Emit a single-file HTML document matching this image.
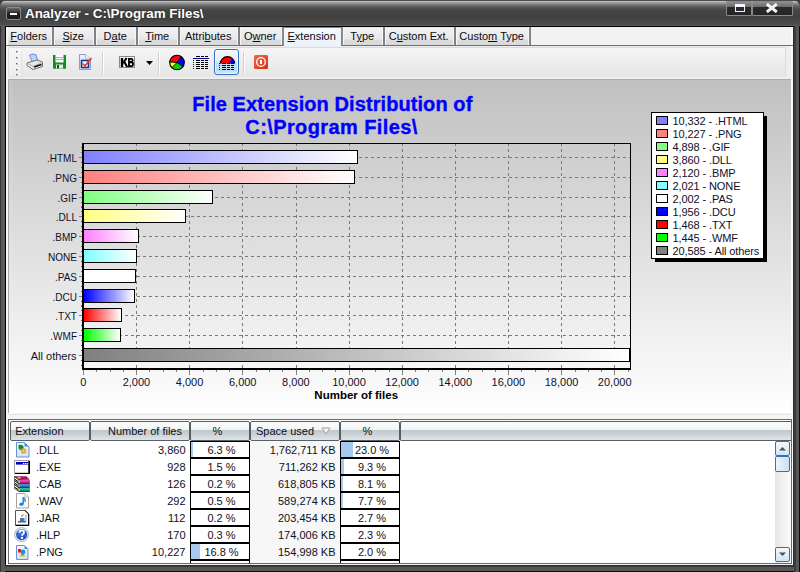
<!DOCTYPE html>
<html><head><meta charset="utf-8"><title>Analyzer</title>
<style>
*{margin:0;padding:0;box-sizing:border-box}
html,body{width:800px;height:572px;overflow:hidden;background:#3c3c3c}
body{position:relative;font-family:"Liberation Sans",sans-serif;font-size:11px;color:#000}
.a{position:absolute}
.t{white-space:pre}
u{text-decoration:underline;text-underline-offset:1px}
</style></head><body>
<div class="a" style="left:0px;top:0px;width:800px;height:572px;background:#3a3a3a;border-radius:7px 7px 0 0;"></div>
<div class="a" style="left:0px;top:0px;width:800px;height:26px;border-radius:7px 7px 0 0;background:linear-gradient(to bottom,#4e4e4e 0.5px,#bababa 1.5px,#a2a2a2 2.5px,#909090 3.5px,#7c7c7c 4.5px,#6c6c6c 5.5px,#606060 6.5px,#575757 7.5px,#4f4f4f 8.5px,#4a4a4a 9.5px,#464646 10.5px,#434343 14.5px,#414141 18.5px,#474747 20.5px,#4e4e4e 24.5px,#5a5a5a 25.5px);"></div>
<div class="a" style="left:0px;top:26px;width:6px;height:546px;background:linear-gradient(to right,#333 0,#333 1px,#555 1px,#5a5a5a 2px,#5a5a5a 5px,#000 5px,#000 6px);"></div>
<div class="a" style="left:793px;top:26px;width:7px;height:546px;background:linear-gradient(to right,#2e2e2e 0,#2e2e2e 1px,#3c3c3c 1px,#3c3c3c 3px,#575757 3px,#575757 6px,#0c0c0c 6px);"></div>
<div class="a" style="left:5px;top:565px;width:789px;height:7px;background:linear-gradient(to bottom,#2e2e2e 0,#2e2e2e 1px,#3c3c3c 1px,#3c3c3c 2px,#575757 2px,#575757 6px,#0c0c0c 6px);"></div>
<div class="a" style="left:5px;top:26px;width:789px;height:1px;background:#000;"></div>
<div class="a" style="left:6px;top:7px;width:15px;height:13px;border:1px solid #8a8a8a;border-radius:2px;background:linear-gradient(#6a6a6a 0,#3a3a3a 4px,#222 5px,#1c1c1c);"></div>
<div class="a" style="left:10px;top:13px;width:7px;height:2px;background:#fff;"></div>
<div class="a t" style="left:25px;top:7.00px;font-size:13.4px;line-height:13.4px;font-weight:700;color:#fff;text-shadow:0 0 2px rgba(0,0,0,.6);">Analyzer - C:\Program Files\</div>
<div class="a" style="left:726px;top:1px;width:26px;height:15px;border:1px solid #8a8a8a;border-radius:1px;background:linear-gradient(#8e8e8e 0,#6a6a6a 5px,#2a2a2a 5px,#242424 14px);"></div>
<div class="a" style="left:735px;top:4px;width:10px;height:8px;border:1.5px solid #f4f4f4;border-top-width:3px;background:#262638;"></div>
<div class="a" style="left:752px;top:1px;width:41px;height:15px;border:1px solid #8a8a8a;border-radius:1px;background:linear-gradient(#8e8e8e 0,#6a6a6a 5px,#2a2a2a 5px,#242424 14px);"></div>
<svg class="a" style="left:765px;top:3px;" width="14" height="10" viewBox="0 0 14 10"><path d="M1.8 1 L11.8 9 M11.8 1 L1.8 9" stroke="#f4f4f4" stroke-width="2.9"/></svg>
<div class="a" style="left:6px;top:27px;width:787px;height:538px;background:#f0f0f0;"></div>
<div class="a" style="left:6px;top:27px;width:2px;height:538px;background:#f8f8f8;"></div>
<div class="a" style="left:791px;top:27px;width:2px;height:538px;background:#fafafa;"></div>
<div class="a" style="left:8px;top:27px;width:783px;height:18px;background:#f2f2f2;"></div>
<div class="a" style="left:6px;top:45px;width:787px;height:1px;background:#6e6e6e;"></div>
<div class="a" style="left:7px;top:27px;width:45px;height:18px;background:linear-gradient(#e4e4e4 0,#e4e4e4 1px,#f2f2f2 1px,#e8e8e8 12px,#dcdcdc 13px,#d8d8d8 18px);border-left:1px solid #f6f6f6;border-right:1px solid #f4f4f4;"></div>
<div class="a" style="left:52px;top:27px;width:2px;height:18px;background:#80808a;"></div>
<div class="a t" style="left:-21.3px;width:100px;text-align:center;top:31.00px;font-size:11px;line-height:11px;font-weight:400;color:#0a0a14;"><u>F</u>olders</div>
<div class="a" style="left:54px;top:27px;width:40px;height:18px;background:linear-gradient(#e4e4e4 0,#e4e4e4 1px,#f2f2f2 1px,#e8e8e8 12px,#dcdcdc 13px,#d8d8d8 18px);border-left:1px solid #f6f6f6;border-right:1px solid #f4f4f4;"></div>
<div class="a" style="left:94px;top:27px;width:2px;height:18px;background:#80808a;"></div>
<div class="a t" style="left:23.200000000000003px;width:100px;text-align:center;top:31.00px;font-size:11px;line-height:11px;font-weight:400;color:#0a0a14;"><u>S</u>ize</div>
<div class="a" style="left:96px;top:27px;width:40px;height:18px;background:linear-gradient(#e4e4e4 0,#e4e4e4 1px,#f2f2f2 1px,#e8e8e8 12px,#dcdcdc 13px,#d8d8d8 18px);border-left:1px solid #f6f6f6;border-right:1px solid #f4f4f4;"></div>
<div class="a" style="left:136px;top:27px;width:2px;height:18px;background:#80808a;"></div>
<div class="a t" style="left:65.2px;width:100px;text-align:center;top:31.00px;font-size:11px;line-height:11px;font-weight:400;color:#0a0a14;">D<u>a</u>te</div>
<div class="a" style="left:138px;top:27px;width:40px;height:18px;background:linear-gradient(#e4e4e4 0,#e4e4e4 1px,#f2f2f2 1px,#e8e8e8 12px,#dcdcdc 13px,#d8d8d8 18px);border-left:1px solid #f6f6f6;border-right:1px solid #f4f4f4;"></div>
<div class="a" style="left:178px;top:27px;width:2px;height:18px;background:#80808a;"></div>
<div class="a t" style="left:107.19999999999999px;width:100px;text-align:center;top:31.00px;font-size:11px;line-height:11px;font-weight:400;color:#0a0a14;"><u>T</u>ime</div>
<div class="a" style="left:180px;top:27px;width:58px;height:18px;background:linear-gradient(#e4e4e4 0,#e4e4e4 1px,#f2f2f2 1px,#e8e8e8 12px,#dcdcdc 13px,#d8d8d8 18px);border-left:1px solid #f6f6f6;border-right:1px solid #f4f4f4;"></div>
<div class="a" style="left:238px;top:27px;width:2px;height:18px;background:#80808a;"></div>
<div class="a t" style="left:158.2px;width:100px;text-align:center;top:31.00px;font-size:11px;line-height:11px;font-weight:400;color:#0a0a14;">Attri<u>b</u>utes</div>
<div class="a" style="left:240px;top:27px;width:42px;height:18px;background:linear-gradient(#e4e4e4 0,#e4e4e4 1px,#f2f2f2 1px,#e8e8e8 12px,#dcdcdc 13px,#d8d8d8 18px);border-left:1px solid #f6f6f6;border-right:1px solid #f4f4f4;"></div>
<div class="a t" style="left:210.2px;width:100px;text-align:center;top:31.00px;font-size:11px;line-height:11px;font-weight:400;color:#0a0a14;">O<u>w</u>ner</div>
<div class="a" style="left:283px;top:27px;width:59px;height:19px;border:1px solid #3c98e8;border-bottom:none;background:linear-gradient(#f4f9fd,#e8f3fb);"></div>
<div class="a t" style="left:261.7px;width:100px;text-align:center;top:31.00px;font-size:11px;line-height:11px;font-weight:400;color:#0a0a14;"><u>E</u>xtension</div>
<div class="a" style="left:343px;top:27px;width:40px;height:18px;background:linear-gradient(#e4e4e4 0,#e4e4e4 1px,#f2f2f2 1px,#e8e8e8 12px,#dcdcdc 13px,#d8d8d8 18px);border-left:1px solid #f6f6f6;border-right:1px solid #f4f4f4;"></div>
<div class="a" style="left:383px;top:27px;width:2px;height:18px;background:#80808a;"></div>
<div class="a t" style="left:312.2px;width:100px;text-align:center;top:31.00px;font-size:11px;line-height:11px;font-weight:400;color:#0a0a14;">T<u>y</u>pe</div>
<div class="a" style="left:385px;top:27px;width:69px;height:18px;background:linear-gradient(#e4e4e4 0,#e4e4e4 1px,#f2f2f2 1px,#e8e8e8 12px,#dcdcdc 13px,#d8d8d8 18px);border-left:1px solid #f6f6f6;border-right:1px solid #f4f4f4;"></div>
<div class="a" style="left:454px;top:27px;width:2px;height:18px;background:#80808a;"></div>
<div class="a t" style="left:368.7px;width:100px;text-align:center;top:31.00px;font-size:11px;line-height:11px;font-weight:400;color:#0a0a14;">C<u>u</u>stom Ext.</div>
<div class="a" style="left:456px;top:27px;width:73px;height:18px;background:linear-gradient(#e4e4e4 0,#e4e4e4 1px,#f2f2f2 1px,#e8e8e8 12px,#dcdcdc 13px,#d8d8d8 18px);border-left:1px solid #f6f6f6;border-right:1px solid #f4f4f4;"></div>
<div class="a" style="left:529px;top:27px;width:2px;height:18px;background:#80808a;"></div>
<div class="a t" style="left:441.7px;width:100px;text-align:center;top:31.00px;font-size:11px;line-height:11px;font-weight:400;color:#0a0a14;">Custo<u>m</u> Type</div>
<div class="a" style="left:282px;top:27px;width:1px;height:18px;background:#8a8a8a;"></div>
<div class="a" style="left:342px;top:27px;width:1px;height:18px;background:#8a8a8a;"></div>
<div class="a" style="left:529px;top:27px;width:1px;height:18px;background:#8a8a8a;"></div>
<div class="a" style="left:8px;top:46px;width:783px;height:33px;background:#eeeef0;"></div>
<div class="a" style="left:8px;top:47px;width:778px;height:30px;border:1px solid #dcdcdc;border-bottom-color:#e4e4e4;border-radius:2px;background:linear-gradient(#f5f5f5,#e6e6e6);"></div>
<div class="a" style="left:9px;top:48px;width:12px;height:28px;background:linear-gradient(#f6f6f6,#eeeeee);"></div>
<div class="a" style="left:21px;top:51px;width:1px;height:24px;background:#e2e2e2;"></div>
<div class="a" style="left:16px;top:51px;width:2px;height:2px;background:#c4c4c4;"></div>
<div class="a" style="left:16px;top:51px;width:1px;height:1px;background:#5a5a5a;"></div>
<div class="a" style="left:16px;top:57px;width:2px;height:2px;background:#c4c4c4;"></div>
<div class="a" style="left:16px;top:57px;width:1px;height:1px;background:#5a5a5a;"></div>
<div class="a" style="left:16px;top:63px;width:2px;height:2px;background:#c4c4c4;"></div>
<div class="a" style="left:16px;top:63px;width:1px;height:1px;background:#5a5a5a;"></div>
<div class="a" style="left:16px;top:69px;width:2px;height:2px;background:#c4c4c4;"></div>
<div class="a" style="left:16px;top:69px;width:1px;height:1px;background:#5a5a5a;"></div>
<div class="a" style="left:16px;top:74px;width:2px;height:2px;background:#c4c4c4;"></div>
<div class="a" style="left:16px;top:74px;width:1px;height:1px;background:#5a5a5a;"></div>
<div class="a" style="left:8px;top:79px;width:783px;height:1px;background:#b0b0a0;"></div>
<div class="a" style="left:102px;top:52px;width:1px;height:22px;background:#d0d0d0;"></div>
<div class="a" style="left:103px;top:52px;width:1px;height:22px;background:#fff;"></div>
<div class="a" style="left:158px;top:52px;width:1px;height:22px;background:#d0d0d0;"></div>
<div class="a" style="left:159px;top:52px;width:1px;height:22px;background:#fff;"></div>
<div class="a" style="left:243px;top:52px;width:1px;height:22px;background:#d0d0d0;"></div>
<div class="a" style="left:244px;top:52px;width:1px;height:22px;background:#fff;"></div>
<svg class="a" style="left:24px;top:50px;" width="24" height="24" viewBox="0 0 24 24">
<path d="M5.5 5 L9 4 L12 4.8 L13.8 10.5 L8.2 11.8 Z" fill="#b0d8f8" stroke="#8078d8" stroke-width="0.9"/>
<path d="M3 13 L13 10 L18.5 12 L18.5 16.5 L9 19.5 L3 15.5 Z" fill="#e8e8e8" stroke="#707070" stroke-width="1"/>
<path d="M3 13 L9 16.5 L18.5 12.5" fill="none" stroke="#a0a0a0" stroke-width="0.8"/>
<path d="M10 17 L17.5 14.5" stroke="#111" stroke-width="1.6"/>
</svg>
<svg class="a" style="left:50px;top:50px;" width="24" height="24" viewBox="0 0 24 24">
<rect x="3" y="5" width="13" height="14" fill="#fff"/>
<path d="M3 5 H5.5 V12.5 H13.5 V5 H16 V18.8 H3 Z" fill="#109018"/>
<rect x="6" y="7" width="7" height="0.9" fill="#a0a0a0"/>
<rect x="6" y="9" width="7" height="0.9" fill="#a0a0a0"/>
<rect x="6" y="14.5" width="7" height="4" fill="#e8e8f0"/>
<rect x="7" y="15" width="2" height="3.5" fill="#0a6010"/>
</svg>
<svg class="a" style="left:74px;top:50px;" width="24" height="24" viewBox="0 0 24 24">
<path d="M5.5 4.5 H11.5 L16.5 9 V19.5 H5.5 Z" fill="#e4eefa" stroke="#9898c8" stroke-width="1"/>
<path d="M11.5 4.5 V9 H16.5" fill="#f4f4f4" stroke="#b0b0b0" stroke-width="0.8"/>
<rect x="7.5" y="10.5" width="7" height="7" fill="#fff" stroke="#0838a0" stroke-width="1.6"/>
<path d="M8.5 13.5 L11 15.8 L17.5 8" fill="none" stroke="#f03010" stroke-width="1.6"/>
</svg>
<div class="a" style="left:119px;top:56px;width:16px;height:12px;border:1px solid #8a8a8a;background:#f8f8f8;"></div>
<svg class="a" style="left:119px;top:56px;" width="16" height="12" viewBox="0 0 16 12"><path d="M3 2 V11" stroke="#000" stroke-width="2.4"/><path d="M4 7.2 L7.6 2 M5.2 5.8 L8.2 11" stroke="#000" stroke-width="2.1"/><path d="M10 2 V11 M10 2.9 H12.3 Q13.6 2.9 13.6 4.4 Q13.6 5.9 12.3 5.9 H10 M10 6.3 H12.6 Q14 6.3 14 8.1 Q14 10.1 12.6 10.1 H10" fill="none" stroke="#000" stroke-width="1.9"/></svg>
<svg class="a" style="left:146px;top:61px;" width="7" height="4" viewBox="0 0 7 4"><path d="M0 0 H7 L3.5 4 Z" fill="#000"/></svg>
<svg class="a" style="left:168px;top:54px;" width="18" height="18" viewBox="0 0 18 18">
<circle cx="9" cy="8.5" r="7.3" fill="#00d000"/>
<path d="M9 8.5 L1.7 8 A7.3 7.3 0 0 1 13.2 2.5 Z" fill="#ff0000"/>
<path d="M9 8.5 L13.2 2.5 A7.3 7.3 0 0 1 15 12.7 Z" fill="#0000ff"/>
<path d="M9 8.5 L3.84 13.66 A7.3 7.3 0 0 1 1.7 8 Z" fill="#ffff00"/>
<path d="M1.7 8 L9 8.5 L13.2 2.5 M9 8.5 L15 12.7 M9 8.5 L3.84 13.66" stroke="#000" stroke-width="0.9" fill="none"/>
<circle cx="9" cy="8.5" r="7.3" fill="none" stroke="#000" stroke-width="1.1"/>
</svg>
<svg class="a" style="left:192px;top:56px;shape-rendering:crispEdges;" width="18" height="14" viewBox="0 0 18 14"><rect x="1" y="2" width="16" height="1" fill="#0000a0"/><rect x="4" y="0" width="4" height="1" fill="#000"/><rect x="9" y="0" width="3" height="1" fill="#000"/><rect x="13" y="0" width="3" height="1" fill="#000"/><rect x="1" y="4" width="1" height="1" fill="#0000c0"/><rect x="4" y="4" width="4" height="1" fill="#000"/><rect x="9" y="4" width="3" height="1" fill="#000"/><rect x="13" y="4" width="3" height="1" fill="#000"/><rect x="1" y="6" width="1" height="1" fill="#0000c0"/><rect x="4" y="6" width="4" height="1" fill="#000"/><rect x="9" y="6" width="3" height="1" fill="#000"/><rect x="13" y="6" width="3" height="1" fill="#000"/><rect x="1" y="8" width="1" height="1" fill="#0000c0"/><rect x="4" y="8" width="4" height="1" fill="#000"/><rect x="9" y="8" width="3" height="1" fill="#000"/><rect x="13" y="8" width="3" height="1" fill="#000"/><rect x="1" y="10" width="1" height="1" fill="#0000c0"/><rect x="4" y="10" width="4" height="1" fill="#000"/><rect x="9" y="10" width="3" height="1" fill="#000"/><rect x="13" y="10" width="3" height="1" fill="#000"/><rect x="1" y="12" width="1" height="1" fill="#0000c0"/><rect x="4" y="12" width="4" height="1" fill="#000"/><rect x="9" y="12" width="3" height="1" fill="#000"/><rect x="13" y="12" width="3" height="1" fill="#000"/></svg>
<div class="a" style="left:214px;top:49px;width:25px;height:26px;border:1px solid #2f6fc4;border-radius:3px;background:linear-gradient(#f2f7fd 0,#e4eff9 45%,#c6e0f5 50%,#bcdcf2 85%,#c8f0fa 100%);box-shadow:inset 0 0 0 1px rgba(255,255,255,.6);"></div>
<svg class="a" style="left:219px;top:56px;" width="18" height="15" viewBox="0 0 18 15"><path d="M1.5 7.5 A7 6.8 0 0 1 15.5 7.5 Z" fill="#ff0000"/>
<path d="M9.5 7.5 L13.3 2.6 A7 6.8 0 0 1 15.5 7.5 Z" fill="#0000ff"/>
<path d="M1.5 7.5 A7 6.8 0 0 1 15.5 7.5" fill="none" stroke="#000" stroke-width="1.2"/><rect x="0" y="7" width="1" height="1" fill="#0000a0"/><rect x="3" y="7" width="4" height="1" fill="#000"/><rect x="8" y="7" width="3" height="1" fill="#000"/><rect x="12" y="7" width="3" height="1" fill="#000"/><rect x="0" y="9" width="1" height="1" fill="#0000a0"/><rect x="3" y="9" width="4" height="1" fill="#000"/><rect x="8" y="9" width="3" height="1" fill="#000"/><rect x="12" y="9" width="3" height="1" fill="#000"/><rect x="0" y="11" width="1" height="1" fill="#0000a0"/><rect x="3" y="11" width="4" height="1" fill="#000"/><rect x="8" y="11" width="3" height="1" fill="#000"/><rect x="12" y="11" width="3" height="1" fill="#000"/><rect x="0" y="13" width="1" height="1" fill="#0000a0"/><rect x="3" y="13" width="4" height="1" fill="#000"/><rect x="8" y="13" width="3" height="1" fill="#000"/><rect x="12" y="13" width="3" height="1" fill="#000"/></svg>
<svg class="a" style="left:253px;top:54px;" width="16" height="16" viewBox="0 0 16 16">
<defs><linearGradient id="sg" x1="0" y1="0" x2="1" y2="1"><stop offset="0" stop-color="#f06848"/><stop offset="1" stop-color="#d83010"/></linearGradient></defs>
<rect x="1" y="1" width="14" height="14" rx="1.5" fill="url(#sg)"/>
<circle cx="8" cy="8" r="4.3" fill="none" stroke="#fff" stroke-width="1.3"/>
<rect x="7" y="6" width="2" height="4" fill="#fff"/>
</svg>
<div class="a" style="left:8px;top:80px;width:783px;height:333px;background:linear-gradient(#c0c0c0,#ffffff);"></div>
<div class="a" style="left:8px;top:79px;width:1px;height:334px;background:#a8a8a0;"></div>
<div class="a" style="left:9px;top:80px;width:4px;height:333px;background:rgba(255,255,255,0.07);"></div>
<div class="a t" style="left:132.3px;width:400px;text-align:center;top:94.00px;font-size:20px;line-height:20px;font-weight:700;color:#0000ff;letter-spacing:0.08px;-webkit-text-stroke:0.35px #0000ff;">File Extension Distribution of</div>
<div class="a t" style="left:131.5px;width:400px;text-align:center;top:117.00px;font-size:20px;line-height:20px;font-weight:700;color:#0000ff;letter-spacing:0.4px;-webkit-text-stroke:0.35px #0000ff;">C:\Program Files\</div>
<div class="a" style="left:136px;top:143px;width:1px;height:225px;background:repeating-linear-gradient(to bottom,#7a7a7a 0,#7a7a7a 3px,transparent 3px,transparent 6px);"></div>
<div class="a" style="left:189px;top:143px;width:1px;height:225px;background:repeating-linear-gradient(to bottom,#7a7a7a 0,#7a7a7a 3px,transparent 3px,transparent 6px);"></div>
<div class="a" style="left:242px;top:143px;width:1px;height:225px;background:repeating-linear-gradient(to bottom,#7a7a7a 0,#7a7a7a 3px,transparent 3px,transparent 6px);"></div>
<div class="a" style="left:296px;top:143px;width:1px;height:225px;background:repeating-linear-gradient(to bottom,#7a7a7a 0,#7a7a7a 3px,transparent 3px,transparent 6px);"></div>
<div class="a" style="left:349px;top:143px;width:1px;height:225px;background:repeating-linear-gradient(to bottom,#7a7a7a 0,#7a7a7a 3px,transparent 3px,transparent 6px);"></div>
<div class="a" style="left:402px;top:143px;width:1px;height:225px;background:repeating-linear-gradient(to bottom,#7a7a7a 0,#7a7a7a 3px,transparent 3px,transparent 6px);"></div>
<div class="a" style="left:455px;top:143px;width:1px;height:225px;background:repeating-linear-gradient(to bottom,#7a7a7a 0,#7a7a7a 3px,transparent 3px,transparent 6px);"></div>
<div class="a" style="left:508px;top:143px;width:1px;height:225px;background:repeating-linear-gradient(to bottom,#7a7a7a 0,#7a7a7a 3px,transparent 3px,transparent 6px);"></div>
<div class="a" style="left:561px;top:143px;width:1px;height:225px;background:repeating-linear-gradient(to bottom,#7a7a7a 0,#7a7a7a 3px,transparent 3px,transparent 6px);"></div>
<div class="a" style="left:614px;top:143px;width:1px;height:225px;background:repeating-linear-gradient(to bottom,#7a7a7a 0,#7a7a7a 3px,transparent 3px,transparent 6px);"></div>
<div class="a" style="left:83px;top:157px;width:547px;height:1px;background:repeating-linear-gradient(to right,#7a7a7a 0,#7a7a7a 3px,transparent 3px,transparent 6px);"></div>
<div class="a" style="left:83px;top:177px;width:547px;height:1px;background:repeating-linear-gradient(to right,#7a7a7a 0,#7a7a7a 3px,transparent 3px,transparent 6px);"></div>
<div class="a" style="left:83px;top:197px;width:547px;height:1px;background:repeating-linear-gradient(to right,#7a7a7a 0,#7a7a7a 3px,transparent 3px,transparent 6px);"></div>
<div class="a" style="left:83px;top:216px;width:547px;height:1px;background:repeating-linear-gradient(to right,#7a7a7a 0,#7a7a7a 3px,transparent 3px,transparent 6px);"></div>
<div class="a" style="left:83px;top:236px;width:547px;height:1px;background:repeating-linear-gradient(to right,#7a7a7a 0,#7a7a7a 3px,transparent 3px,transparent 6px);"></div>
<div class="a" style="left:83px;top:256px;width:547px;height:1px;background:repeating-linear-gradient(to right,#7a7a7a 0,#7a7a7a 3px,transparent 3px,transparent 6px);"></div>
<div class="a" style="left:83px;top:276px;width:547px;height:1px;background:repeating-linear-gradient(to right,#7a7a7a 0,#7a7a7a 3px,transparent 3px,transparent 6px);"></div>
<div class="a" style="left:83px;top:296px;width:547px;height:1px;background:repeating-linear-gradient(to right,#7a7a7a 0,#7a7a7a 3px,transparent 3px,transparent 6px);"></div>
<div class="a" style="left:83px;top:315px;width:547px;height:1px;background:repeating-linear-gradient(to right,#7a7a7a 0,#7a7a7a 3px,transparent 3px,transparent 6px);"></div>
<div class="a" style="left:83px;top:335px;width:547px;height:1px;background:repeating-linear-gradient(to right,#7a7a7a 0,#7a7a7a 3px,transparent 3px,transparent 6px);"></div>
<div class="a" style="left:83px;top:355px;width:547px;height:1px;background:repeating-linear-gradient(to right,#7a7a7a 0,#7a7a7a 3px,transparent 3px,transparent 6px);"></div>
<div class="a" style="left:82px;top:150px;width:276px;height:14px;border:1px solid #000;border-left-width:2px;background:linear-gradient(to right,#8080ff,#fff);"></div>
<div class="a t" style="left:-3.4000000000000057px;width:80px;text-align:right;top:153.00px;font-size:11px;line-height:11px;font-weight:400;color:#10102a;transform:scaleX(0.91);transform-origin:100% 50%;">.HTML</div>
<div class="a" style="left:79px;top:157px;width:3px;height:1px;background:#808080;"></div>
<div class="a" style="left:81px;top:147px;width:1px;height:1px;background:#6a6a6a;"></div>
<div class="a" style="left:81px;top:152px;width:1px;height:1px;background:#6a6a6a;"></div>
<div class="a" style="left:81px;top:162px;width:1px;height:1px;background:#6a6a6a;"></div>
<div class="a" style="left:81px;top:167px;width:1px;height:1px;background:#6a6a6a;"></div>
<div class="a" style="left:82px;top:170px;width:273px;height:14px;border:1px solid #000;border-left-width:2px;background:linear-gradient(to right,#ff8080,#fff);"></div>
<div class="a t" style="left:-3.4000000000000057px;width:80px;text-align:right;top:173.00px;font-size:11px;line-height:11px;font-weight:400;color:#10102a;transform:scaleX(0.91);transform-origin:100% 50%;">.PNG</div>
<div class="a" style="left:79px;top:177px;width:3px;height:1px;background:#808080;"></div>
<div class="a" style="left:81px;top:167px;width:1px;height:1px;background:#6a6a6a;"></div>
<div class="a" style="left:81px;top:172px;width:1px;height:1px;background:#6a6a6a;"></div>
<div class="a" style="left:81px;top:182px;width:1px;height:1px;background:#6a6a6a;"></div>
<div class="a" style="left:81px;top:187px;width:1px;height:1px;background:#6a6a6a;"></div>
<div class="a" style="left:82px;top:190px;width:131px;height:14px;border:1px solid #000;border-left-width:2px;background:linear-gradient(to right,#80ff80,#fff);"></div>
<div class="a t" style="left:-3.4000000000000057px;width:80px;text-align:right;top:193.00px;font-size:11px;line-height:11px;font-weight:400;color:#10102a;transform:scaleX(0.91);transform-origin:100% 50%;">.GIF</div>
<div class="a" style="left:79px;top:197px;width:3px;height:1px;background:#808080;"></div>
<div class="a" style="left:81px;top:187px;width:1px;height:1px;background:#6a6a6a;"></div>
<div class="a" style="left:81px;top:192px;width:1px;height:1px;background:#6a6a6a;"></div>
<div class="a" style="left:81px;top:202px;width:1px;height:1px;background:#6a6a6a;"></div>
<div class="a" style="left:81px;top:207px;width:1px;height:1px;background:#6a6a6a;"></div>
<div class="a" style="left:82px;top:209px;width:104px;height:14px;border:1px solid #000;border-left-width:2px;background:linear-gradient(to right,#ffff80,#fff);"></div>
<div class="a t" style="left:-3.4000000000000057px;width:80px;text-align:right;top:212.00px;font-size:11px;line-height:11px;font-weight:400;color:#10102a;transform:scaleX(0.91);transform-origin:100% 50%;">.DLL</div>
<div class="a" style="left:79px;top:216px;width:3px;height:1px;background:#808080;"></div>
<div class="a" style="left:81px;top:206px;width:1px;height:1px;background:#6a6a6a;"></div>
<div class="a" style="left:81px;top:211px;width:1px;height:1px;background:#6a6a6a;"></div>
<div class="a" style="left:81px;top:221px;width:1px;height:1px;background:#6a6a6a;"></div>
<div class="a" style="left:81px;top:226px;width:1px;height:1px;background:#6a6a6a;"></div>
<div class="a" style="left:82px;top:229px;width:57px;height:14px;border:1px solid #000;border-left-width:2px;background:linear-gradient(to right,#ff80ff,#fff);"></div>
<div class="a t" style="left:-3.4000000000000057px;width:80px;text-align:right;top:232.00px;font-size:11px;line-height:11px;font-weight:400;color:#10102a;transform:scaleX(0.91);transform-origin:100% 50%;">.BMP</div>
<div class="a" style="left:79px;top:236px;width:3px;height:1px;background:#808080;"></div>
<div class="a" style="left:81px;top:226px;width:1px;height:1px;background:#6a6a6a;"></div>
<div class="a" style="left:81px;top:231px;width:1px;height:1px;background:#6a6a6a;"></div>
<div class="a" style="left:81px;top:241px;width:1px;height:1px;background:#6a6a6a;"></div>
<div class="a" style="left:81px;top:246px;width:1px;height:1px;background:#6a6a6a;"></div>
<div class="a" style="left:82px;top:249px;width:55px;height:14px;border:1px solid #000;border-left-width:2px;background:linear-gradient(to right,#80ffff,#fff);"></div>
<div class="a t" style="left:-3.4000000000000057px;width:80px;text-align:right;top:252.00px;font-size:11px;line-height:11px;font-weight:400;color:#10102a;transform:scaleX(0.91);transform-origin:100% 50%;">NONE</div>
<div class="a" style="left:79px;top:256px;width:3px;height:1px;background:#808080;"></div>
<div class="a" style="left:81px;top:246px;width:1px;height:1px;background:#6a6a6a;"></div>
<div class="a" style="left:81px;top:251px;width:1px;height:1px;background:#6a6a6a;"></div>
<div class="a" style="left:81px;top:261px;width:1px;height:1px;background:#6a6a6a;"></div>
<div class="a" style="left:81px;top:266px;width:1px;height:1px;background:#6a6a6a;"></div>
<div class="a" style="left:82px;top:269px;width:54px;height:14px;border:1px solid #000;border-left-width:2px;background:linear-gradient(to right,#ffffff,#fff);"></div>
<div class="a t" style="left:-3.4000000000000057px;width:80px;text-align:right;top:272.00px;font-size:11px;line-height:11px;font-weight:400;color:#10102a;transform:scaleX(0.91);transform-origin:100% 50%;">.PAS</div>
<div class="a" style="left:79px;top:276px;width:3px;height:1px;background:#808080;"></div>
<div class="a" style="left:81px;top:266px;width:1px;height:1px;background:#6a6a6a;"></div>
<div class="a" style="left:81px;top:271px;width:1px;height:1px;background:#6a6a6a;"></div>
<div class="a" style="left:81px;top:281px;width:1px;height:1px;background:#6a6a6a;"></div>
<div class="a" style="left:81px;top:286px;width:1px;height:1px;background:#6a6a6a;"></div>
<div class="a" style="left:82px;top:289px;width:53px;height:14px;border:1px solid #000;border-left-width:2px;background:linear-gradient(to right,#0000ff,#fff);"></div>
<div class="a t" style="left:-3.4000000000000057px;width:80px;text-align:right;top:292.00px;font-size:11px;line-height:11px;font-weight:400;color:#10102a;transform:scaleX(0.91);transform-origin:100% 50%;">.DCU</div>
<div class="a" style="left:79px;top:296px;width:3px;height:1px;background:#808080;"></div>
<div class="a" style="left:81px;top:286px;width:1px;height:1px;background:#6a6a6a;"></div>
<div class="a" style="left:81px;top:291px;width:1px;height:1px;background:#6a6a6a;"></div>
<div class="a" style="left:81px;top:301px;width:1px;height:1px;background:#6a6a6a;"></div>
<div class="a" style="left:81px;top:306px;width:1px;height:1px;background:#6a6a6a;"></div>
<div class="a" style="left:82px;top:308px;width:40px;height:14px;border:1px solid #000;border-left-width:2px;background:linear-gradient(to right,#ff0000,#fff);"></div>
<div class="a t" style="left:-3.4000000000000057px;width:80px;text-align:right;top:311.00px;font-size:11px;line-height:11px;font-weight:400;color:#10102a;transform:scaleX(0.91);transform-origin:100% 50%;">.TXT</div>
<div class="a" style="left:79px;top:315px;width:3px;height:1px;background:#808080;"></div>
<div class="a" style="left:81px;top:305px;width:1px;height:1px;background:#6a6a6a;"></div>
<div class="a" style="left:81px;top:310px;width:1px;height:1px;background:#6a6a6a;"></div>
<div class="a" style="left:81px;top:320px;width:1px;height:1px;background:#6a6a6a;"></div>
<div class="a" style="left:81px;top:325px;width:1px;height:1px;background:#6a6a6a;"></div>
<div class="a" style="left:82px;top:328px;width:39px;height:14px;border:1px solid #000;border-left-width:2px;background:linear-gradient(to right,#00ff00,#fff);"></div>
<div class="a t" style="left:-3.4000000000000057px;width:80px;text-align:right;top:331.00px;font-size:11px;line-height:11px;font-weight:400;color:#10102a;transform:scaleX(0.91);transform-origin:100% 50%;">.WMF</div>
<div class="a" style="left:79px;top:335px;width:3px;height:1px;background:#808080;"></div>
<div class="a" style="left:81px;top:325px;width:1px;height:1px;background:#6a6a6a;"></div>
<div class="a" style="left:81px;top:330px;width:1px;height:1px;background:#6a6a6a;"></div>
<div class="a" style="left:81px;top:340px;width:1px;height:1px;background:#6a6a6a;"></div>
<div class="a" style="left:81px;top:345px;width:1px;height:1px;background:#6a6a6a;"></div>
<div class="a" style="left:82px;top:348px;width:548px;height:14px;border:1px solid #000;border-left-width:2px;background:linear-gradient(to right,#808080,#fff);"></div>
<div class="a t" style="left:-3.4000000000000057px;width:80px;text-align:right;top:351.00px;font-size:11px;line-height:11px;font-weight:400;color:#10102a;">All others</div>
<div class="a" style="left:79px;top:355px;width:3px;height:1px;background:#808080;"></div>
<div class="a" style="left:81px;top:345px;width:1px;height:1px;background:#6a6a6a;"></div>
<div class="a" style="left:81px;top:350px;width:1px;height:1px;background:#6a6a6a;"></div>
<div class="a" style="left:81px;top:360px;width:1px;height:1px;background:#6a6a6a;"></div>
<div class="a" style="left:81px;top:365px;width:1px;height:1px;background:#6a6a6a;"></div>
<div class="a" style="left:82px;top:143px;width:549px;height:1px;background:#000;"></div>
<div class="a" style="left:82px;top:143px;width:2px;height:227px;background:#000;"></div>
<div class="a" style="left:630px;top:143px;width:1px;height:227px;background:#000;"></div>
<div class="a" style="left:82px;top:368px;width:549px;height:2px;background:#000;"></div>
<div class="a" style="left:83px;top:370px;width:1px;height:5px;background:#808080;"></div>
<div class="a t" style="left:53.3px;width:60px;text-align:center;top:377.00px;font-size:11px;line-height:11px;font-weight:400;color:#10102a;">0</div>
<div class="a" style="left:96px;top:370px;width:1px;height:2px;background:#808080;"></div>
<div class="a" style="left:110px;top:370px;width:1px;height:2px;background:#808080;"></div>
<div class="a" style="left:123px;top:370px;width:1px;height:2px;background:#808080;"></div>
<div class="a" style="left:136px;top:370px;width:1px;height:5px;background:#808080;"></div>
<div class="a t" style="left:106.44px;width:60px;text-align:center;top:377.00px;font-size:11px;line-height:11px;font-weight:400;color:#10102a;">2,000</div>
<div class="a" style="left:149px;top:370px;width:1px;height:2px;background:#808080;"></div>
<div class="a" style="left:163px;top:370px;width:1px;height:2px;background:#808080;"></div>
<div class="a" style="left:176px;top:370px;width:1px;height:2px;background:#808080;"></div>
<div class="a" style="left:189px;top:370px;width:1px;height:5px;background:#808080;"></div>
<div class="a t" style="left:159.58px;width:60px;text-align:center;top:377.00px;font-size:11px;line-height:11px;font-weight:400;color:#10102a;">4,000</div>
<div class="a" style="left:203px;top:370px;width:1px;height:2px;background:#808080;"></div>
<div class="a" style="left:216px;top:370px;width:1px;height:2px;background:#808080;"></div>
<div class="a" style="left:229px;top:370px;width:1px;height:2px;background:#808080;"></div>
<div class="a" style="left:242px;top:370px;width:1px;height:5px;background:#808080;"></div>
<div class="a t" style="left:212.72px;width:60px;text-align:center;top:377.00px;font-size:11px;line-height:11px;font-weight:400;color:#10102a;">6,000</div>
<div class="a" style="left:256px;top:370px;width:1px;height:2px;background:#808080;"></div>
<div class="a" style="left:269px;top:370px;width:1px;height:2px;background:#808080;"></div>
<div class="a" style="left:282px;top:370px;width:1px;height:2px;background:#808080;"></div>
<div class="a" style="left:296px;top:370px;width:1px;height:5px;background:#808080;"></div>
<div class="a t" style="left:265.86px;width:60px;text-align:center;top:377.00px;font-size:11px;line-height:11px;font-weight:400;color:#10102a;">8,000</div>
<div class="a" style="left:309px;top:370px;width:1px;height:2px;background:#808080;"></div>
<div class="a" style="left:322px;top:370px;width:1px;height:2px;background:#808080;"></div>
<div class="a" style="left:335px;top:370px;width:1px;height:2px;background:#808080;"></div>
<div class="a" style="left:349px;top:370px;width:1px;height:5px;background:#808080;"></div>
<div class="a t" style="left:319.0px;width:60px;text-align:center;top:377.00px;font-size:11px;line-height:11px;font-weight:400;color:#10102a;">10,000</div>
<div class="a" style="left:362px;top:370px;width:1px;height:2px;background:#808080;"></div>
<div class="a" style="left:375px;top:370px;width:1px;height:2px;background:#808080;"></div>
<div class="a" style="left:389px;top:370px;width:1px;height:2px;background:#808080;"></div>
<div class="a" style="left:402px;top:370px;width:1px;height:5px;background:#808080;"></div>
<div class="a t" style="left:372.14px;width:60px;text-align:center;top:377.00px;font-size:11px;line-height:11px;font-weight:400;color:#10102a;">12,000</div>
<div class="a" style="left:415px;top:370px;width:1px;height:2px;background:#808080;"></div>
<div class="a" style="left:428px;top:370px;width:1px;height:2px;background:#808080;"></div>
<div class="a" style="left:442px;top:370px;width:1px;height:2px;background:#808080;"></div>
<div class="a" style="left:455px;top:370px;width:1px;height:5px;background:#808080;"></div>
<div class="a t" style="left:425.28000000000003px;width:60px;text-align:center;top:377.00px;font-size:11px;line-height:11px;font-weight:400;color:#10102a;">14,000</div>
<div class="a" style="left:468px;top:370px;width:1px;height:2px;background:#808080;"></div>
<div class="a" style="left:482px;top:370px;width:1px;height:2px;background:#808080;"></div>
<div class="a" style="left:495px;top:370px;width:1px;height:2px;background:#808080;"></div>
<div class="a" style="left:508px;top:370px;width:1px;height:5px;background:#808080;"></div>
<div class="a t" style="left:478.42px;width:60px;text-align:center;top:377.00px;font-size:11px;line-height:11px;font-weight:400;color:#10102a;">16,000</div>
<div class="a" style="left:521px;top:370px;width:1px;height:2px;background:#808080;"></div>
<div class="a" style="left:535px;top:370px;width:1px;height:2px;background:#808080;"></div>
<div class="a" style="left:548px;top:370px;width:1px;height:2px;background:#808080;"></div>
<div class="a" style="left:561px;top:370px;width:1px;height:5px;background:#808080;"></div>
<div class="a t" style="left:531.56px;width:60px;text-align:center;top:377.00px;font-size:11px;line-height:11px;font-weight:400;color:#10102a;">18,000</div>
<div class="a" style="left:575px;top:370px;width:1px;height:2px;background:#808080;"></div>
<div class="a" style="left:588px;top:370px;width:1px;height:2px;background:#808080;"></div>
<div class="a" style="left:601px;top:370px;width:1px;height:2px;background:#808080;"></div>
<div class="a" style="left:614px;top:370px;width:1px;height:5px;background:#808080;"></div>
<div class="a t" style="left:584.6999999999999px;width:60px;text-align:center;top:377.00px;font-size:11px;line-height:11px;font-weight:400;color:#10102a;">20,000</div>
<div class="a" style="left:628px;top:370px;width:1px;height:2px;background:#808080;"></div>
<div class="a t" style="left:276.2px;width:160px;text-align:center;top:390.00px;font-size:11.5px;line-height:11.5px;font-weight:700;color:#000;">Number of files</div>
<div class="a" style="left:655px;top:116px;width:112px;height:146px;background:#000;"></div>
<div class="a" style="left:651px;top:112px;width:113px;height:147px;background:#fff;border:1px solid #000;"></div>
<div class="a" style="left:656px;top:116px;width:12px;height:9px;background:#8080ff;border:1px solid #000;"></div>
<div class="a t" style="left:672.5px;top:116.00px;font-size:11px;line-height:11px;font-weight:400;color:#10102a;letter-spacing:-0.1px;">10,332 - .HTML</div>
<div class="a" style="left:656px;top:129px;width:12px;height:9px;background:#ff8080;border:1px solid #000;"></div>
<div class="a t" style="left:672.5px;top:129.00px;font-size:11px;line-height:11px;font-weight:400;color:#10102a;letter-spacing:-0.1px;">10,227 - .PNG</div>
<div class="a" style="left:656px;top:142px;width:12px;height:9px;background:#80ff80;border:1px solid #000;"></div>
<div class="a t" style="left:672.5px;top:142.00px;font-size:11px;line-height:11px;font-weight:400;color:#10102a;letter-spacing:-0.1px;">4,898 - .GIF</div>
<div class="a" style="left:656px;top:155px;width:12px;height:9px;background:#ffff80;border:1px solid #000;"></div>
<div class="a t" style="left:672.5px;top:155.00px;font-size:11px;line-height:11px;font-weight:400;color:#10102a;letter-spacing:-0.1px;">3,860 - .DLL</div>
<div class="a" style="left:656px;top:168px;width:12px;height:9px;background:#ff80ff;border:1px solid #000;"></div>
<div class="a t" style="left:672.5px;top:168.00px;font-size:11px;line-height:11px;font-weight:400;color:#10102a;letter-spacing:-0.1px;">2,120 - .BMP</div>
<div class="a" style="left:656px;top:181px;width:12px;height:9px;background:#80ffff;border:1px solid #000;"></div>
<div class="a t" style="left:672.5px;top:181.00px;font-size:11px;line-height:11px;font-weight:400;color:#10102a;letter-spacing:-0.1px;">2,021 - NONE</div>
<div class="a" style="left:656px;top:194px;width:12px;height:9px;background:#ffffff;border:1px solid #000;"></div>
<div class="a t" style="left:672.5px;top:194.00px;font-size:11px;line-height:11px;font-weight:400;color:#10102a;letter-spacing:-0.1px;">2,002 - .PAS</div>
<div class="a" style="left:656px;top:207px;width:12px;height:9px;background:#0000ff;border:1px solid #000;"></div>
<div class="a t" style="left:672.5px;top:207.00px;font-size:11px;line-height:11px;font-weight:400;color:#10102a;letter-spacing:-0.1px;">1,956 - .DCU</div>
<div class="a" style="left:656px;top:220px;width:12px;height:9px;background:#ff0000;border:1px solid #000;"></div>
<div class="a t" style="left:672.5px;top:220.00px;font-size:11px;line-height:11px;font-weight:400;color:#10102a;letter-spacing:-0.1px;">1,468 - .TXT</div>
<div class="a" style="left:656px;top:233px;width:12px;height:9px;background:#00ff00;border:1px solid #000;"></div>
<div class="a t" style="left:672.5px;top:233.00px;font-size:11px;line-height:11px;font-weight:400;color:#10102a;letter-spacing:-0.1px;">1,445 - .WMF</div>
<div class="a" style="left:656px;top:246px;width:12px;height:9px;background:#808080;border:1px solid #000;"></div>
<div class="a t" style="left:672.5px;top:246.00px;font-size:11px;line-height:11px;font-weight:400;color:#10102a;letter-spacing:-0.1px;">20,585 - All others</div>
<div class="a" style="left:8px;top:413px;width:783px;height:6px;background:#f6f6f6;"></div>
<div class="a" style="left:8px;top:414px;width:783px;height:1px;background:#e4e4e4;"></div>
<div class="a" style="left:8px;top:419px;width:784px;height:145px;border:1px solid #6a6a6a;background:#fff;"></div>
<div class="a" style="left:9px;top:420px;width:781px;height:1px;background:#fcfcfc;"></div>
<div class="a" style="left:10px;top:421px;width:80px;height:20px;border:1px solid #566064;border-radius:2px;background:linear-gradient(#fdfdfd 0,#f3f5f6 40%,#eceff1 45%,#bfc9d0 47%,#c6ced4 60%,#dfe4e7 100%);"></div>
<div class="a" style="left:90px;top:421px;width:100px;height:20px;border:1px solid #566064;border-radius:2px;background:linear-gradient(#fdfdfd 0,#f3f5f6 40%,#eceff1 45%,#bfc9d0 47%,#c6ced4 60%,#dfe4e7 100%);"></div>
<div class="a" style="left:190px;top:421px;width:60px;height:20px;border:1px solid #566064;border-radius:2px;background:linear-gradient(#fdfdfd 0,#f3f5f6 40%,#eceff1 45%,#bfc9d0 47%,#c6ced4 60%,#dfe4e7 100%);"></div>
<div class="a" style="left:250px;top:421px;width:90px;height:20px;border:1px solid #566064;border-radius:2px;background:linear-gradient(#fdfdfd 0,#f3f5f6 40%,#eceff1 45%,#bfc9d0 47%,#c6ced4 60%,#dfe4e7 100%);"></div>
<div class="a" style="left:340px;top:421px;width:60px;height:20px;border:1px solid #566064;border-radius:2px;background:linear-gradient(#fdfdfd 0,#f3f5f6 40%,#eceff1 45%,#bfc9d0 47%,#c6ced4 60%,#dfe4e7 100%);"></div>
<div class="a" style="left:400px;top:421px;width:391px;height:20px;border:1px solid #566064;border-right:none;border-radius:2px 0 0 2px;background:linear-gradient(#fdfdfd 0,#f3f5f6 40%,#eceff1 45%,#bfc9d0 47%,#c6ced4 60%,#dfe4e7 100%);"></div>
<div class="a t" style="left:15.2px;top:426.00px;font-size:11px;line-height:11px;font-weight:400;color:#101020;">Extension</div>
<div class="a t" style="left:62px;width:120px;text-align:right;top:426.00px;font-size:11px;line-height:11px;font-weight:400;color:#101020;">Number of files</div>
<div class="a t" style="left:202.3px;width:30px;text-align:center;top:426.00px;font-size:11px;line-height:11px;font-weight:400;color:#101020;">%</div>
<div class="a t" style="left:256px;top:426.00px;font-size:11px;line-height:11px;font-weight:400;color:#101020;">Space used</div>
<div class="a t" style="left:352.3px;width:30px;text-align:center;top:426.00px;font-size:11px;line-height:11px;font-weight:400;color:#101020;">%</div>
<svg class="a" style="left:321px;top:427px;" width="10" height="8" viewBox="0 0 10 8"><path d="M1 1 H9 L5 7 Z" fill="#f4f4f4" stroke="#a0a0a0" stroke-width="1"/></svg>
<div class="a" style="left:250px;top:441px;width:90px;height:122px;background:#f7f7f7;"></div>
<div class="a" style="left:9px;top:441px;width:766px;height:122px;overflow:hidden">
<div class="a" style="left:181px;top:0px;width:60px;height:17px;border:1px solid #000;background:#fff;"></div>
<div class="a" style="left:331px;top:0px;width:60px;height:17px;border:1px solid #000;background:#fff;"></div>
<div class="a" style="left:182px;top:1px;width:2px;height:15px;background:#a8c8ee;"></div>
<div class="a" style="left:332px;top:1px;width:12px;height:15px;background:#a8c8ee;"></div>
<div class="a t" style="left:27px;top:4.00px;line-height:11px;color:#101020">.DLL</div>
<div class="a t" style="left:96.5px;width:80px;text-align:right;top:4.00px;line-height:11px;color:#101020">3,860</div>
<div class="a t" style="left:184.5px;width:56px;text-align:center;top:4.00px;line-height:11px;color:#101020">6.3 %</div>
<div class="a t" style="left:241.5px;width:85px;text-align:right;top:4.00px;line-height:11px;color:#101020">1,762,711 KB</div>
<div class="a t" style="left:335.0px;width:56px;text-align:center;top:4.00px;line-height:11px;color:#101020">23.0 %</div>
<div class="a" style="left:181px;top:17px;width:60px;height:17px;border:1px solid #000;background:#fff;"></div>
<div class="a" style="left:331px;top:17px;width:60px;height:17px;border:1px solid #000;background:#fff;"></div>
<div class="a" style="left:332px;top:18px;width:3px;height:15px;background:#a8c8ee;"></div>
<div class="a t" style="left:27px;top:21.00px;line-height:11px;color:#101020">.EXE</div>
<div class="a t" style="left:96.5px;width:80px;text-align:right;top:21.00px;line-height:11px;color:#101020">928</div>
<div class="a t" style="left:184.5px;width:56px;text-align:center;top:21.00px;line-height:11px;color:#101020">1.5 %</div>
<div class="a t" style="left:241.5px;width:85px;text-align:right;top:21.00px;line-height:11px;color:#101020">711,262 KB</div>
<div class="a t" style="left:335.0px;width:56px;text-align:center;top:21.00px;line-height:11px;color:#101020">9.3 %</div>
<div class="a" style="left:181px;top:34px;width:60px;height:17px;border:1px solid #000;background:#fff;"></div>
<div class="a" style="left:331px;top:34px;width:60px;height:17px;border:1px solid #000;background:#fff;"></div>
<div class="a" style="left:332px;top:35px;width:2px;height:15px;background:#a8c8ee;"></div>
<div class="a t" style="left:27px;top:38.00px;line-height:11px;color:#101020">.CAB</div>
<div class="a t" style="left:96.5px;width:80px;text-align:right;top:38.00px;line-height:11px;color:#101020">126</div>
<div class="a t" style="left:184.5px;width:56px;text-align:center;top:38.00px;line-height:11px;color:#101020">0.2 %</div>
<div class="a t" style="left:241.5px;width:85px;text-align:right;top:38.00px;line-height:11px;color:#101020">618,805 KB</div>
<div class="a t" style="left:335.0px;width:56px;text-align:center;top:38.00px;line-height:11px;color:#101020">8.1 %</div>
<div class="a" style="left:181px;top:51px;width:60px;height:17px;border:1px solid #000;background:#fff;"></div>
<div class="a" style="left:331px;top:51px;width:60px;height:17px;border:1px solid #000;background:#fff;"></div>
<div class="a" style="left:332px;top:52px;width:2px;height:15px;background:#a8c8ee;"></div>
<div class="a t" style="left:27px;top:55.00px;line-height:11px;color:#101020">.WAV</div>
<div class="a t" style="left:96.5px;width:80px;text-align:right;top:55.00px;line-height:11px;color:#101020">292</div>
<div class="a t" style="left:184.5px;width:56px;text-align:center;top:55.00px;line-height:11px;color:#101020">0.5 %</div>
<div class="a t" style="left:241.5px;width:85px;text-align:right;top:55.00px;line-height:11px;color:#101020">589,274 KB</div>
<div class="a t" style="left:335.0px;width:56px;text-align:center;top:55.00px;line-height:11px;color:#101020">7.7 %</div>
<div class="a" style="left:181px;top:68px;width:60px;height:17px;border:1px solid #000;background:#fff;"></div>
<div class="a" style="left:331px;top:68px;width:60px;height:17px;border:1px solid #000;background:#fff;"></div>
<div class="a t" style="left:27px;top:72.00px;line-height:11px;color:#101020">.JAR</div>
<div class="a t" style="left:96.5px;width:80px;text-align:right;top:72.00px;line-height:11px;color:#101020">112</div>
<div class="a t" style="left:184.5px;width:56px;text-align:center;top:72.00px;line-height:11px;color:#101020">0.2 %</div>
<div class="a t" style="left:241.5px;width:85px;text-align:right;top:72.00px;line-height:11px;color:#101020">203,454 KB</div>
<div class="a t" style="left:335.0px;width:56px;text-align:center;top:72.00px;line-height:11px;color:#101020">2.7 %</div>
<div class="a" style="left:181px;top:85px;width:60px;height:17px;border:1px solid #000;background:#fff;"></div>
<div class="a" style="left:331px;top:85px;width:60px;height:17px;border:1px solid #000;background:#fff;"></div>
<div class="a t" style="left:27px;top:89.00px;line-height:11px;color:#101020">.HLP</div>
<div class="a t" style="left:96.5px;width:80px;text-align:right;top:89.00px;line-height:11px;color:#101020">170</div>
<div class="a t" style="left:184.5px;width:56px;text-align:center;top:89.00px;line-height:11px;color:#101020">0.3 %</div>
<div class="a t" style="left:241.5px;width:85px;text-align:right;top:89.00px;line-height:11px;color:#101020">174,006 KB</div>
<div class="a t" style="left:335.0px;width:56px;text-align:center;top:89.00px;line-height:11px;color:#101020">2.3 %</div>
<div class="a" style="left:181px;top:102px;width:60px;height:17px;border:1px solid #000;background:#fff;"></div>
<div class="a" style="left:331px;top:102px;width:60px;height:17px;border:1px solid #000;background:#fff;"></div>
<div class="a" style="left:182px;top:103px;width:9px;height:15px;background:#a8c8ee;"></div>
<div class="a t" style="left:27px;top:106.00px;line-height:11px;color:#101020">.PNG</div>
<div class="a t" style="left:96.5px;width:80px;text-align:right;top:106.00px;line-height:11px;color:#101020">10,227</div>
<div class="a t" style="left:184.5px;width:56px;text-align:center;top:106.00px;line-height:11px;color:#101020">16.8 %</div>
<div class="a t" style="left:241.5px;width:85px;text-align:right;top:106.00px;line-height:11px;color:#101020">154,998 KB</div>
<div class="a t" style="left:335.0px;width:56px;text-align:center;top:106.00px;line-height:11px;color:#101020">2.0 %</div>
<div class="a" style="left:181px;top:119px;width:60px;height:17px;border:1px solid #000;background:#fff;"></div>
<div class="a" style="left:331px;top:119px;width:60px;height:17px;border:1px solid #000;background:#fff;"></div>
</div>
<svg class="a" style="left:14px;top:441px;" width="16" height="17" viewBox="0 0 16 17">
<defs><linearGradient id="pg" x1="0" y1="0" x2="0" y2="1"><stop offset="0" stop-color="#f2f7ff"/><stop offset="1" stop-color="#d4e2f8"/></linearGradient></defs>
<path d="M2.5 1.5 H10.5 L15 6 V16 H2.5 Z" fill="url(#pg)" stroke="#6f8fd4" stroke-width="1"/>
<path d="M10.5 1.5 V5.5 H15 Z" fill="#4a8ee0"/>
<circle cx="7" cy="6.4" r="2.6" fill="#22a828"/>
<path d="M4 5 L6 3.5 L9.5 6 L8 8.5 Z" fill="#10901a"/>
<circle cx="9.6" cy="10" r="2.7" fill="#e8a830"/>
<circle cx="9.6" cy="10" r="1" fill="#f4d080"/>
</svg>
<svg class="a" style="left:14px;top:460px;" width="16" height="14" viewBox="0 0 16 14">
<rect x="0.5" y="0.5" width="14" height="12.5" fill="#fff" stroke="#a0a0a0"/>
<path d="M15.2 0.8 V13.8 H0.8" stroke="#000" stroke-width="1.6" fill="none"/>
<rect x="2" y="2" width="12" height="2.6" fill="#0000c8"/>
<rect x="9" y="3" width="1.2" height="1.2" fill="#fff"/><rect x="10.8" y="3" width="1.2" height="1.2" fill="#fff"/><rect x="12.5" y="3" width="1.2" height="1.2" fill="#fff"/>
</svg>
<svg class="a" style="left:14px;top:476px;" width="16" height="16" viewBox="0 0 16 16">
<path d="M0 0.3 L12.5 0.3 L15.8 3.8 L5 4 Z" fill="#a01858"/>
<rect x="3.5" y="1" width="3" height="1.5" fill="#d8d020"/>
<path d="M0 0.5 L5 4 V7.5 L0 4 Z" fill="#fff" stroke="#000" stroke-width="0.7"/>
<rect x="5" y="4" width="10.8" height="3.5" fill="#c01a78"/>
<rect x="5.5" y="4.4" width="10" height="1" fill="#f078c8"/>
<path d="M0 4.5 L4.5 8 V11.5 L0 8 Z" fill="#fff" stroke="#000" stroke-width="0.7"/>
<rect x="4.5" y="8" width="11.3" height="3.5" fill="#1a68c0"/>
<rect x="5" y="8.4" width="10.5" height="1" fill="#68b8f0"/>
<path d="M0 8.5 L5 12 V15.5 L0 12 Z" fill="#fff" stroke="#000" stroke-width="0.7"/>
<rect x="5" y="12" width="10.8" height="3.5" fill="#109860"/>
<rect x="5.5" y="12.4" width="10" height="1" fill="#58e0a8"/>
<path d="M0.5 3 L4 5.5 M0.5 7 L4 9.5 M0.5 11 L4 13.5" stroke="#000" stroke-width="1"/>
<rect x="5" y="4.5" width="1" height="2.5" fill="#e0d020"/><rect x="4.5" y="8.5" width="1" height="2.5" fill="#e0d020"/><rect x="5" y="12.5" width="1" height="2.5" fill="#e0d020"/>
<path d="M5 7.6 H15.8 M4.5 11.6 H15.8 M5 15.6 H15.8" stroke="#101010" stroke-width="0.8"/>
</svg>
<svg class="a" style="left:14px;top:492px;" width="16" height="17" viewBox="0 0 16 17">
<path d="M2.5 1.5 H11 L14.5 5 V16 H2.5 Z" fill="#fff" stroke="#a4a4a4" stroke-width="1"/>
<path d="M11 1.5 V5 H14.5" fill="#f0f0f0" stroke="#b8b8b8" stroke-width="0.8"/>
<path d="M9.2 5 V12" stroke="#1a88e8" stroke-width="1.5"/>
<ellipse cx="7.4" cy="12.2" rx="2.1" ry="1.7" fill="#1a88e8"/>
<path d="M9.2 5.2 Q11.8 6.8 11 10" stroke="#1a88e8" stroke-width="1.3" fill="none"/>
</svg>
<svg class="a" style="left:14px;top:509px;" width="16" height="17" viewBox="0 0 16 17">
<path d="M1.5 1.5 H11 L14.5 5 V16 H1.5 Z" fill="#fff" stroke="#555" stroke-width="1"/>
<path d="M14.8 5 V16.5 H1.5" fill="none" stroke="#000" stroke-width="1"/>
<path d="M11 1.3 L14.8 5" stroke="#000" stroke-width="1"/>
<rect x="4" y="12" width="8" height="1.5" fill="#3a6a98"/>
<rect x="6" y="9" width="4.5" height="3" fill="#4a7aa8"/>
<rect x="11.5" y="5.5" width="1" height="7" fill="#8aa4c0"/>
<path d="M7.5 8 Q8 6.5 9.5 5.5" stroke="#f07820" stroke-width="1.3" fill="none"/>
</svg>
<svg class="a" style="left:14px;top:526px;" width="16" height="17" viewBox="0 0 16 17">
<defs><radialGradient id="hg" cx="0.4" cy="0.3" r="0.8"><stop offset="0" stop-color="#4a7ce0"/><stop offset="1" stop-color="#1a44b0"/></radialGradient></defs>
<circle cx="7.6" cy="8.6" r="7" fill="#eef0f8" stroke="#9aa0b0" stroke-width="0.8"/>
<circle cx="7.6" cy="8.6" r="5.6" fill="url(#hg)"/>
<path d="M5.4 6.8 Q5.4 4.4 7.7 4.4 Q10 4.4 10 6.4 Q10 7.8 8.4 8.5 L8.1 9.8" fill="none" stroke="#fff" stroke-width="1.7"/>
<rect x="7" y="11" width="2" height="1.9" fill="#fff"/>
</svg>
<svg class="a" style="left:14px;top:544px;" width="16" height="17" viewBox="0 0 16 17">
<path d="M2.5 1.5 H10.5 L14 5 V15.5 H2.5 Z" fill="url(#pg)" stroke="#6f8fd4" stroke-width="1"/>
<path d="M10.5 1.5 V5 H14 Z" fill="#4a8ee0"/>
<rect x="4" y="5" width="3" height="3.5" fill="#f81808"/>
<circle cx="9" cy="8" r="2.4" fill="#1a90f0"/>
<rect x="6" y="11" width="5" height="1.6" fill="#f0c020"/>
<rect x="7" y="9.8" width="3" height="1.4" fill="#38c838"/>
</svg>
<div class="a" style="left:775px;top:441px;width:16px;height:122px;background:linear-gradient(to right,#e6e6e6,#fafafa);"></div>
<div class="a" style="left:775px;top:441px;width:15px;height:15px;border:1px solid #3472b8;border-radius:2px;background:linear-gradient(#f4f8fc,#cfe6f8);"></div>
<svg class="a" style="left:778px;top:446px;" width="9" height="5" viewBox="0 0 9 5"><path d="M1 4.5 L4.5 1 L8 4.5 Z" fill="#505050"/></svg>
<div class="a" style="left:775px;top:456px;width:15px;height:16px;border:1px solid #3472b8;border-radius:2px;background:linear-gradient(to right,#eaf4fc,#c8e2f6);"></div>
<div class="a" style="left:775px;top:547px;width:15px;height:15px;border:1px solid #3472b8;border-radius:2px;background:linear-gradient(#f4f8fc,#cfe6f8);"></div>
<svg class="a" style="left:778px;top:552px;" width="9" height="5" viewBox="0 0 9 5"><path d="M1 0.5 L4.5 4 L8 0.5 Z" fill="#505050"/></svg>
</body></html>
